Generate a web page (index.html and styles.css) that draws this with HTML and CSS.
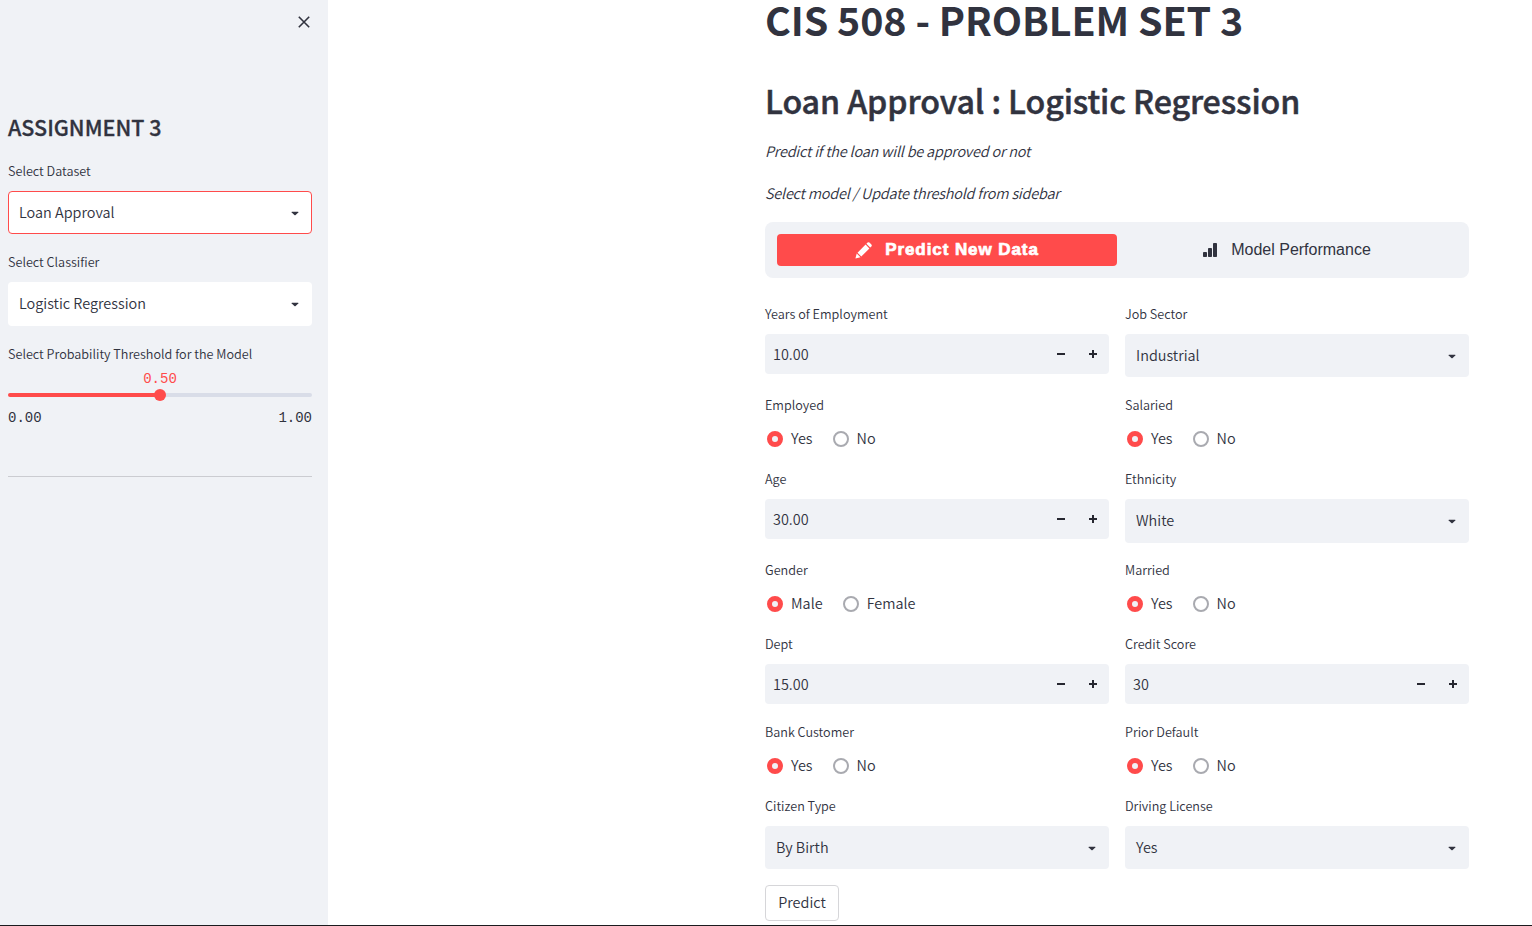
FILE: index.html
```
<!DOCTYPE html>
<html lang="en">
<head>
<meta charset="utf-8">
<title>Loan Approval</title>
<link rel="stylesheet" href="styles.css">
</head>
<body>
<svg class="defs" width="0" height="0">
  <symbol id="caret" viewBox="0 0 8 5"><path d="M1 .7h6q.7.3.3.8L4.6 4q-.6.5-1.200 0L.7 1.500Q.3 1 1 .7z" fill="#31333f"/></symbol>
  <symbol id="minus" viewBox="0 0 8 8"><path d="M0 3h8v2H0z" fill="#262730"/></symbol>
  <symbol id="plus" viewBox="0 0 8 8"><path d="M0 3h3V0h2v3h3v2H5v3H3V5H0z" fill="#262730"/></symbol>
</svg>
<div class="app">
  <aside class="sidebar">
    <button class="close" aria-label="Close"><svg width="12" height="12" viewBox="0 0 12 12"><path d="M.8.8l10.4 10.4M11.2.8L.8 11.2" stroke="#31333f" stroke-width="1.6" fill="none"/></svg></button>
    <h3 class="side-title">ASSIGNMENT 3</h3>
    <div class="field side-field">
      <div class="label">Select Dataset</div>
      <div class="select white focus"><span>Loan Approval</span><svg class="caret"><use href="#caret"/></svg></div>
    </div>
    <div class="field side-field">
      <div class="label">Select Classifier</div>
      <div class="select white"><span>Logistic Regression</span><svg class="caret"><use href="#caret"/></svg></div>
    </div>
    <div class="field threshold">
      <div class="label">Select Probability Threshold for the Model</div>
      <div class="slider-value">0.50</div>
      <div class="track"><i class="thumb"></i></div>
      <div class="ticks"><span>0.00</span><span>1.00</span></div>
    </div>
    <hr class="rule">
  </aside>
  <main class="main">
    <div class="content">
      <h1 class="title">CIS 508 - PROBLEM SET 3</h1>
      <h2 class="subtitle">Loan Approval : Logistic Regression</h2>
      <p class="note">Predict if the loan will be approved or not</p>
      <p class="note second">Select model / Update threshold from sidebar</p>
      <nav class="tabs">
        <a class="tab active"><svg width="17" height="17" viewBox="0 0 17 17"><path d="M.4 16.6l1.3-5.1 3.8 3.8zM2.5 10.7L10.6 2.600l3.800 3.800L6.300 14.500zM11.400 1.800L12.600.600q.9-.8 1.800 0l2 2q.8.9 0 1.800L15.200 5.600z" fill="#fff"/></svg><span>Predict New Data</span></a>
        <a class="tab"><svg width="14" height="14" viewBox="0 0 14 14"><rect y="9" width="4" height="5" rx=".8" fill="#31333f"/><rect x="5" y="5" width="4" height="9" rx=".8" fill="#31333f"/><rect x="10" width="4" height="14" rx=".8" fill="#31333f"/></svg><span>Model Performance</span></a>
      </nav>
      <div class="form">
        <div class="row tall">
          <div class="field"><div class="label">Years of Employment</div><div class="number"><span>10.00</span><svg class="step"><use href="#minus"/></svg><svg class="step"><use href="#plus"/></svg></div></div>
          <div class="field"><div class="label">Job Sector</div><div class="select"><span>Industrial</span><svg class="caret"><use href="#caret"/></svg></div></div>
        </div>
        <div class="row short">
          <div class="field"><div class="label">Employed</div><div class="radios"><label class="radio on"><i></i><span>Yes</span></label><label class="radio"><i></i><span>No</span></label></div></div>
          <div class="field"><div class="label">Salaried</div><div class="radios"><label class="radio on"><i></i><span>Yes</span></label><label class="radio"><i></i><span>No</span></label></div></div>
        </div>
        <div class="row tall">
          <div class="field"><div class="label">Age</div><div class="number"><span>30.00</span><svg class="step"><use href="#minus"/></svg><svg class="step"><use href="#plus"/></svg></div></div>
          <div class="field"><div class="label">Ethnicity</div><div class="select"><span>White</span><svg class="caret"><use href="#caret"/></svg></div></div>
        </div>
        <div class="row short">
          <div class="field"><div class="label">Gender</div><div class="radios"><label class="radio on"><i></i><span>Male</span></label><label class="radio"><i></i><span>Female</span></label></div></div>
          <div class="field"><div class="label">Married</div><div class="radios"><label class="radio on"><i></i><span>Yes</span></label><label class="radio"><i></i><span>No</span></label></div></div>
        </div>
        <div class="row medium">
          <div class="field"><div class="label">Dept</div><div class="number"><span>15.00</span><svg class="step"><use href="#minus"/></svg><svg class="step"><use href="#plus"/></svg></div></div>
          <div class="field"><div class="label">Credit Score</div><div class="number"><span>30</span><svg class="step"><use href="#minus"/></svg><svg class="step"><use href="#plus"/></svg></div></div>
        </div>
        <div class="row short">
          <div class="field"><div class="label">Bank Customer</div><div class="radios"><label class="radio on"><i></i><span>Yes</span></label><label class="radio"><i></i><span>No</span></label></div></div>
          <div class="field"><div class="label">Prior Default</div><div class="radios"><label class="radio on"><i></i><span>Yes</span></label><label class="radio"><i></i><span>No</span></label></div></div>
        </div>
        <div class="row last">
          <div class="field"><div class="label">Citizen Type</div><div class="select"><span>By Birth</span><svg class="caret"><use href="#caret"/></svg></div></div>
          <div class="field"><div class="label">Driving License</div><div class="select"><span>Yes</span><svg class="caret"><use href="#caret"/></svg></div></div>
        </div>
      </div>
      <button class="predict">Predict</button>
    </div>
  </main>
</div>
</body>
</html>
```
FILE: styles.css
```
* { box-sizing: border-box; }
body {
  margin: 0;
  background: #fff;
  color: #31333f;
  font-family: "Noto Sans CJK JP", "Noto Sans CJK SC", sans-serif;
  font-size: 14.45px;
  font-weight: 350;
  line-height: 24px;
}
svg { display: block; flex: none; }
.defs { position: absolute; }
button { font: inherit; color: inherit; background: none; border: 0; padding: 0; }
.app {
  display: flex;
  height: 926px;
  overflow: hidden;
  border-bottom: 1px solid #1b1b1e;
}
.sidebar {
  display: flex;
  flex-direction: column;
  width: 328px;
  padding: 16px 16px 0 8px;
  background: #f0f2f6;
}
.close { align-self: flex-end; margin-right: 2px; height: 12px; }
.side-title { margin: 84px 0 19px; font-size: 21.5px; line-height: 30px; font-weight: 500; -webkit-text-stroke: .3px; }
.label { height: 30px; font-size: 12.64px; line-height: 20px; white-space: nowrap; }
.side-field { height: 91.2px; }
.threshold { padding-top: .6px; }
.select {
  display: flex;
  align-items: center;
  height: 43.4px;
  padding: 0 13px 0 11px;
  border-radius: 4px;
  background: #f0f2f6;
}
.select span, .number span { flex: 1; }
.select span { padding-bottom: 2px; }
.select.white { background: #fff; }
.select.focus { border: 1px solid #ff4b4b; padding: 0 12px 0 10px; }
.caret { width: 8px; height: 5px; margin-top: 2px; }
.slider-value {
  margin-top: -5px;
  height: 24px;
  line-height: 20px;
  text-align: center;
  color: #ff4b4b;
  font-family: "Liberation Mono", monospace;
  font-size: 14px;
}
.track {
  display: flex;
  align-items: center;
  justify-content: center;
  height: 4px;
  border-radius: 4px;
  background: linear-gradient(to right, #ff4b4b 50%, #d9dde8 50%);
}
.thumb { flex: none; width: 12px; height: 12px; border-radius: 50%; background: #ff4b4b; }
.ticks {
  display: flex;
  justify-content: space-between;
  margin-top: 11px;
  line-height: 20px;
  font-family: "Liberation Mono", monospace;
  font-size: 14px;
}
.rule { width: 100%; margin: 48px 0 0; border: 0; border-top: 1px solid #cbccd1; }
.main { flex: 1; padding-left: 437px; }
.content { width: 704px; }
.title { margin: 0; height: 74px; font-size: 39.4px; line-height: 38px; font-weight: 700; letter-spacing: -.08px; white-space: nowrap; }
.subtitle { margin: 0; height: 65px; font-size: 32.2px; line-height: 52px; font-weight: 500; letter-spacing: -.1px; -webkit-text-stroke: .5px; white-space: nowrap; }
.note { margin: 0; height: 42px; font-style: italic; letter-spacing: -.2px; }
.note.second { height: 41px; }
.tabs {
  display: grid;
  grid-template-columns: 340px 340px;
  height: 56px;
  padding: 12px;
  border-radius: 8px;
  background: #f0f2f6;
  font-family: "Liberation Sans", Arial, sans-serif;
  font-size: 16px;
}
.tab { display: flex; align-items: center; justify-content: center; gap: 14px; border-radius: 4px; }
.tab.active { gap: 13px; background: #ff4b4b; color: #fff; font-size: 17px; font-weight: 700; letter-spacing: .92px; -webkit-text-stroke: .7px; }
.form { margin-top: 26px; }
.row { display: grid; grid-template-columns: 344px 344px; column-gap: 16px; }
.tall { height: 91.2px; }
.short { height: 74px; }
.medium { height: 88px; }
.last { height: 88.6px; }
.last .select { height: 43px; }
.number {
  display: flex;
  align-items: center;
  gap: 24px;
  height: 40px;
  padding: 0 12px 0 8px;
  border-radius: 4px;
  background: #f0f2f6;
}
.step { width: 8px; height: 8px; }
.radios { display: flex; gap: 20px; padding: 1px 0 0 2px; }
.radio { display: flex; align-items: center; gap: 8px; }
.radio span { padding-bottom: 1px; }
.radio i { width: 16px; height: 16px; border-radius: 50%; border: 2px solid #a9aab0; background: #fff; }
.radio.on i { border: 5px solid #ff4b4b; background: #f0f2f6; }
.predict { width: 74px; height: 36px; padding-bottom: 2px; border: 1px solid #d6d6d9; border-radius: 4px; background: #fff; }
```
